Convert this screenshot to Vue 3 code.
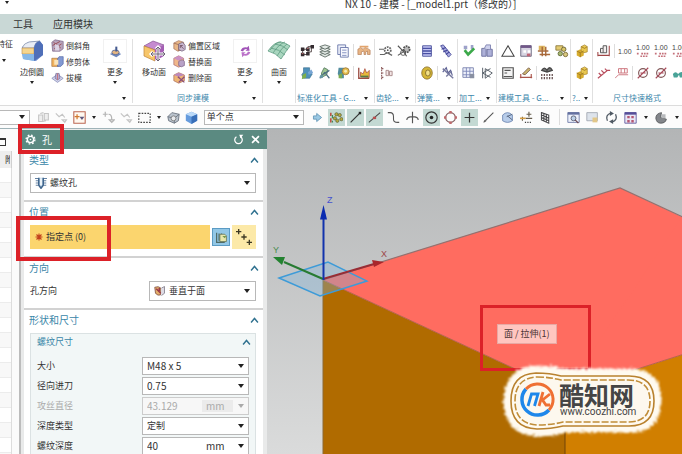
<script setup>
import { ref } from 'vue'

const art = {
  edgeBlend: '<path d="M2 8 8 3 19 2 23 6v10l-7 6-13-2z" fill="#6f8fd0"/><path d="M2 9q2-5 7-6l11-1q-5 1-6 7z" fill="#e9edf5" stroke="#7f8ca8" stroke-width=".7"/><path d="M2 9h12v6H2z" fill="#f6d68e" stroke="#b98b4c" stroke-width=".6"/><path d="M2 15h12v7L3 20z" fill="#86b8e8"/><path d="M14 9q1-6 6-7l3 4v10l-9 6z" fill="#4f6fb8"/>',
  moveFace: '<path d="M2 7 11 2l11 4-9 5z" fill="#c58bd0" stroke="#865295" stroke-width=".7"/><path d="M2 7l11 4v11L2 17z" fill="#f7c66a" stroke="#bd8238" stroke-width=".7"/><path d="M13 11l9-5v11l-9 5z" fill="#a45eb4"/><path d="M16 8v14M9 15h14M14 10l2-2 2 2M14 20l2 2 2-2M11 13l-2 2 2 2M21 13l2 2-2 2" fill="none" stroke="#fff" stroke-width="3"/><path d="M16 8v14M9 15h14M14 10l2-2 2 2M14 20l2 2 2-2M11 13l-2 2 2 2M21 13l2 2-2 2" fill="none" stroke="#6b6274" stroke-width="1"/>',
  surface: '<path d="M1 12Q7 3 14 3q5 1 9 4-4 5-9 13Q9 14 1 12z" fill="#a9d6bf" stroke="#5f9c81" stroke-width=".8"/><path d="M4 9q8 1 14 7M8 5q8 1 13 6M6 14q6-9 12-11M10 17q5-9 10-12M3 11q7-9 11-8" fill="none" stroke="#5f9c81" stroke-width=".8"/>',
  moreFeature: '<path d="M1 11l7-3 7 3-6 4z" fill="#6d87bd"/><ellipse cx="8" cy="9" rx="4.500" ry="2.800" fill="#e6b680" stroke="#52679a"/><path d="M9 2v6" stroke="#44598f" stroke-width="2.500"/>',
  moreSync: '<path d="M2 7q2-5 8-4l2-2 1 6H8l2-2Q6 4 5 8z" fill="#a154b8"/><path d="M14 9q-2 5-8 4l-2 2-1-6h5l-2 2q4 1 5-3z" fill="#bb72c9"/>',
  chamfer: '<path d="M1 4 5 1l10 2v9l-4 3H2z" fill="#b7a3bb" stroke="#715a80" stroke-width=".8"/><path d="M2 8l9-5M4 12l9-6M3 4l9 7" stroke="#9a4d56" stroke-width="1.2"/><path d="M5 6l5 2v6H5z" fill="#dcd3e4"/>',
  trimBody: '<path d="M1 4h8v10H1z" fill="#f1b35f" stroke="#a56c35" stroke-width=".8"/><path d="M8 5l2-3h5v9l-3 3H8z" fill="#8299d3" stroke="#4d63a5" stroke-width=".8"/><path d="M4 6h5v6H4z" fill="#f9e3b9"/>',
  draft: '<path d="M1 9l7-5 7 5-7 5z" fill="#d2d3ea" stroke="#777eae" stroke-width=".8"/><path d="M5 9l1-6h4l1 6-3 2z" fill="#b8acd1" stroke="#716896" stroke-width=".8"/><path d="M8 3v8" stroke="#c46d6d"/>',
  offsetRegion: '<path d="M1 5l6-3 6 2v8l-7 3-5-3z" fill="#e9b787" stroke="#9d6b59" stroke-width=".8"/><path d="M1 5l6 2v8" fill="none" stroke="#9d6b59"/><path d="M7 6l5-2 3 4v5l-4 2-4-2z" fill="#c6b5cd" stroke="#665570" stroke-width=".8"/><path d="M9 8l4 4M9 11V8h3" stroke="#6c4a5d" fill="none"/>',
  replaceFace: '<path d="M1 4l6-3 6 3v8l-6 3-6-3z" fill="#f0b78a" stroke="#a4646d" stroke-width=".8"/><path d="M1 4l6 3 6-3-6-3z" fill="#cb91c5"/><path d="M7 8q5-4 7 0v5q-4 3-7 0z" fill="#b8a2c7" stroke="#755b83" stroke-width=".8"/>',
  deleteFace: '<path d="M1 5l6-3 7 3v7l-7 3-6-3z" fill="#efb575" stroke="#a56352" stroke-width=".8"/><path d="M1 5l6 2 7-2-7-3z" fill="#bc88bd"/><path d="M6 7l8 7M14 7l-7 7" stroke="#884d79" stroke-width="1.600"/>',
  net: '<path d="M3 12V6h6V3h5M9 6v6H3M9 9h4V3" fill="none" stroke="#493d3d"/><g fill="#332b2f"><path d="M1 4h4v4H1zM7 4h4v4H7zM1 10h4v4H1zM7 9h4v4H7zM12 1h4v4h-4z"/></g><path d="M2 11h2M8 5h2" stroke="#cf7777"/>',
  stack: '<g fill="#e4eae6" stroke="#5b6962" stroke-width="1"><path d="M2 12l6-2 6 2-6 3z"/><path d="M2 9l6-2 6 2-6 3z"/><path d="M2 6l6-2 6 2-6 3z"/><path d="M2 3l6-2 6 2-6 3z"/></g>',
  sheets: '<path d="M2 1h9v11H2z" fill="#eef1fa" stroke="#6775a8"/><path d="M5 4h9v11H5z" fill="#f8f9fe" stroke="#6775a8"/><path d="M7 7h5M7 10h5M7 13h5" stroke="#7887ba"/>',
  hand: '<path d="M1 12V6l3-2 3 2 2-2 3 1 3 2v5h-3V8l-2 1v3H8V8L5 9v3z" fill="#e8b585" stroke="#af744d" stroke-width=".7"/><path d="M3 3h10" stroke="#e2a46c" stroke-width="2"/>',
  partBlue: '<path d="M4 2h7v5l3 2-3 5H4l-2-4 2-3z" fill="#4f91ba" stroke="#376b8a" stroke-width=".7"/><path d="M3 10l4-2v5l-5 2z" fill="#7eae4a"/><path d="M9 7l4-3 2 4-5 2z" fill="#78a5d4"/>',
  partPen: '<path d="M4 13V8l3-6 4 2-1 6z" fill="#9dc590" stroke="#4e735a" stroke-width=".9"/><path d="M7 9l6-4M2 14l6-7M9 9l4 5" stroke="#4c6e80" stroke-width="1.4"/><circle cx="4" cy="12" r="2" fill="#6597a3"/>',
  partGear: '<path d="M3 2h6v12H5l-3-5z" fill="#528c9e"/><circle cx="11" cy="6" r="4" fill="#e5bc4c" stroke="#9e793c"/><circle cx="11" cy="6" r="1.6" fill="#f5ebb5"/><path d="M3 10l4-2v6H3z" fill="#7cab50"/>',
  chartSpark: '<path d="M2 2v12h12" fill="none" stroke="#9a4c42" stroke-width="1.5"/><path d="M4 12V7l3 2 2-6 2 5 3-3v8z" fill="#e7b83b" stroke="#a6443e" stroke-width=".8"/><path d="M4 12h9" stroke="#567b43" stroke-width="2"/>',
  gearA: '<circle cx="10" cy="7" r="3.500" fill="none" stroke="#696969" stroke-width="2" stroke-dasharray="2 1"/><circle cx="10" cy="7" r="1" fill="#555"/><path d="M0 6h6M1 12h5l3-2 6 3" fill="none" stroke="#666" stroke-width="1.4"/>',
  gearB: '<circle cx="11" cy="6" r="3.5" fill="#bbb" stroke="#555" stroke-width="2" stroke-dasharray="2 1"/><circle cx="7" cy="10" r="3" fill="none" stroke="#555"/><path d="M1 2l6 6 4 6M1 13l6-4" stroke="#555" stroke-width="1.3" fill="none"/>',
  tree: '<path d="M3 1v14M3 3h3M3 8h3M3 13h3" stroke="#8e5e5e" stroke-width="1.3" stroke-dasharray="2 1" fill="none"/><path d="M8 5h3v6H8zM12 6h3v5h-3z" fill="#f3e6e6" stroke="#a58585"/>',
  spring: '<path d="M3 2h10v12H3z" fill="#c3c5f2" stroke="#484f99"/><path d="M3 5h10M3 8h10M3 11h10" stroke="#4950a3" stroke-width="1.6"/>',
  springTilt: '<path d="M3 2l3-1 9 11-3 3z" fill="#a9abe0" stroke="#474a99"/><path d="M4 6l5-2M6 9l5-2M9 12l4-3" stroke="#44479a" stroke-width="1.3"/>',
  disc: '<ellipse cx="8" cy="8" rx="6" ry="7" fill="#d6b736" stroke="#8f7428"/><ellipse cx="9" cy="8" rx="2.7" ry="3.5" fill="#f3e187" stroke="#826c2c"/>',
  springPen: '<path d="M2 7l4-5 2 6 3-3 2 6" fill="none" stroke="#5d6294" stroke-width="1.3"/><path d="M2 3l12 11M6 12l6-6" stroke="#777aa0" stroke-width="1.600"/>',
  machineCheck: '<path d="M2 2h4v4H2zM10 1h3v5h-3z" fill="#9da1c9"/><path d="M3 7l4 5 7-7" fill="none" stroke="#3ca94a" stroke-width="3"/>',
  blocks: '<path d="M2 5h5v9H2zM8 6h6v8H8z" fill="#aeb1d8" stroke="#686d9b"/><path d="M5 5l2-4h5v5" fill="#cdd0ec" stroke="#7b7faf"/>',
  gridPage: '<path d="M1 2h12v11H1z" fill="#edf0fa" stroke="#7881ad"/><path d="M1 6h12M5 2v11M9 2v11M1 10h12" stroke="#7c86b8"/><path d="M9 9h5v5H9z" fill="#8990a2"/>',
  mirror: '<path d="M3 2v12M3 8l9-5M3 8l9 5M6 3l8 5-8 6M6 3v11" fill="none" stroke="#58616a" stroke-width="1.100"/>',
  triangle: '<path d="M8 2l7 12H1z" fill="none" stroke="#444" stroke-width="1.2"/>',
  tableTool: '<path d="M2 2h12v12H2z" fill="#d8d5e2" stroke="#65617a"/><path d="M2 3h12" stroke="#715788" stroke-width="3"/><path d="M5 7h3v3H5zM10 7h3v3h-3z" fill="#fff"/><path d="M9 11h4v3H9z" fill="#c06474"/>',
  hashTool: '<path d="M2 2h7v5H2z" fill="#ddb55f"/><path d="M1 8h12M6 3v11M10 3v11M3 12h12" stroke="#a8693a" stroke-width="1.6"/>',
  leafTool: '<path d="M1 2h8v5H1z" fill="#e4cb71" stroke="#8c793d"/><circle cx="10" cy="6" r="2.500" fill="#dac666" stroke="#665f38"/><circle cx="6" cy="11" r="2.500" fill="#a7b76f" stroke="#5f6937"/><circle cx="12" cy="12" r="2.500" fill="#d9c87e" stroke="#776835"/>',
  frame: '<path d="M2 2h12v12H2z" fill="#f4f4f4" stroke="#505050" stroke-width="1.3"/><path d="M4 5h7M4 8h3M3 12h10" stroke="#555" stroke-width="1.4"/>',
  plane: '<path d="M1 13h14M2 9v5M14 9v5" stroke="#aa544a" stroke-width="1.3"/><path d="M4 9l7-7 2 2-6 6z" fill="#cbb56d" stroke="#785c4b"/>',
  barcode: '<path d="M2 5q3-5 6 0 3-6 6 0l-6 2z" fill="#777" stroke="#444" stroke-width="1.5"/><path d="M2 9v6M5 9v6M8 9v6M11 9v6M14 9v6" stroke="#6a5555" stroke-width="1.500" stroke-dasharray="2.500 1"/>',
  gold: '<path d="M2 8l4-2 4 2v5l-4 2-4-2z" fill="#d8ad2e"/><path d="M7 3l4-2 3 2v6l-4 1-3-2z" fill="#e9c850" stroke="#a58128" stroke-width=".8"/><path d="M2 8l4 2 4-2M6 10v5M7 3l4 2 3-2" fill="none" stroke="#9d7824"/>',
  dimBox: '<path d="M1 13h13M1 9v5M14 2v12" stroke="#9f4545" stroke-width="1.2" fill="none"/><path d="M4 10V5h3V2h4v8z" fill="#f3eeee" stroke="#555" stroke-width="1.100"/><path d="M7 5v5" stroke="#555"/>',
  d100: '<text x="0" y="11" font-size="8" font-family="Liberation Sans" fill="#444">1.00</text>',
  dtol: '<text x="0" y="7" font-size="8" font-family="Liberation Sans" fill="#444">1.00</text><path d="M1 11h3M6 11h8M5 14h9" stroke="#c4707a" stroke-width="1.8" stroke-dasharray="2 1"/>',
  leader: '<path d="M1 14 12 5h3M2 8l3 3M5 5l3 3M9 3l2 2" fill="none" stroke="#b84d5d" stroke-width="1.4"/>',
  leaderBox: '<path d="M0 14 4 10h11M4 3h10v5H4zM7 3v5M11 3v5" fill="none" stroke="#ce7880" stroke-width="1.1"/>',
  diameter: '<circle cx="8" cy="8" r="5" fill="none" stroke="#805657" stroke-width="1.3"/><path d="M2 14 14 2M5 8h6" stroke="#a74958" stroke-width="1.3"/>',
  glasses: '<path d="M1 9q3-4 6 0 3-4 8-1v5H9L8 10l-2 3H2z" fill="#49a398"/>',
  ghostA: '<path d="M2 5h5v8H2zM9 3h5v8H9zM4 3l4-1M7 13l4-1" fill="#eee" stroke="#c5c5c5" stroke-width="1.3"/>',
  ghostB: '<path d="M1 3l4 4 4-3 3 4M9 11h5l-2 3z" fill="none" stroke="#c5c5c5" stroke-width="1.5"/>',
  snap: '<path d="M1 1h14v14H1z" fill="#fff8f0" stroke="#bc6752" stroke-width="1.3"/><path d="M5 4v6M2 7h6" stroke="#d2772d" stroke-width="1.5"/><path d="M8 7h6l-3 4z" fill="#5e567c"/>',
  ghostC: '<path d="M4 1v6M1 4h6M8 4q4 0 4 6M9 11h6l-3 3z" fill="none" stroke="#b4b4b4" stroke-width="1.5"/>',
  marquee: '<path d="M1 3h14v11H1z" fill="none" stroke="#454545" stroke-width="1.4" stroke-dasharray="2 1.5"/>',
  cubeGray: '<path d="M1 7l5-5 9 2-1 8-5 3-7-3z" fill="#bac3cd" stroke="#626b77"/><path d="M1 7l8 2 6-5M9 9v6" fill="none" stroke="#626b77"/><circle cx="8" cy="9" r="3" fill="#e8eaed" stroke="#777"/>',
  cubeBlue: '<path d="M1 4l7-3 7 3v8l-7 4-7-4z" fill="#659bdd"/><path d="M1 4l7 3 7-3-7-3z" fill="#bcdaf8"/><path d="M8 7l7-3v8l-7 4z" fill="#396fb8"/>',
  next: '<path d="M3 6h4V3l6 5-6 5v-3H3z" fill="#9ac8e3" stroke="#5c91b4"/>',
  points: '<g fill="#b6a93c" stroke="#575b36" stroke-width=".8"><circle cx="8" cy="4" r="2"/><circle cx="12" cy="5" r="2"/><circle cx="6" cy="9" r="2"/><circle cx="9" cy="12" r="2"/><circle cx="14" cy="10" r="2"/></g><path d="M1 2v4M1 9v5" stroke="#bd5446" stroke-width="2"/><path d="M3 5v4M3 12v2" stroke="#3f8a58" stroke-width="1.500"/>',
  lineEnd: '<path d="M2 14 13 3" stroke="#333" stroke-width="1.4"/><path d="M12 1h3v3h-3z" fill="#222"/>',
  lineMid: '<path d="M1 14 15 2" stroke="#444" stroke-width="1.3"/><path d="M6 7h4v3H6z" fill="#b85050"/>',
  hook: '<path d="M1 2h3q4 0 4 5v3q0 4 5 4h2" fill="none" stroke="#555" stroke-width="1.3"/>',
  cross: '<path d="M8 1v14M1 11q0-4 7-4t7 4" fill="none" stroke="#555" stroke-width="1.4"/>',
  target: '<circle cx="8" cy="8" r="7" fill="none" stroke="#333" stroke-width="1.4"/><circle cx="8" cy="8" r="2.2" fill="#222"/>',
  quad: '<circle cx="8" cy="8" r="6" fill="none" stroke="#80595b" stroke-width="1.3"/><path d="M6.500 0h3v3h-3zM6.500 13h3v3h-3zM0 6.500h3v3H0zM13 6.500h3v3h-3z" fill="#c0696c"/>',
  plus: '<path d="M8 2v12M2 8h12" stroke="#333" stroke-width="1.5"/>',
  slash: '<path d="M2 14 14 2" stroke="#555" stroke-width="1.3"/><circle cx="4" cy="12" r="1.3" fill="#666"/>',
  facePoint: '<path d="M2 5q6-6 12 0v7q-6 4-12 0z" fill="#b8cdea" stroke="#6680ae"/><path d="M7 7l7-3M8 6l6 5" stroke="#596883" stroke-width="1.2"/>',
  pointList: '<path d="M11 1v6M8 4h6M3 7v5M7 9h8" stroke="#665d4c" stroke-width="1.4"/><path d="M0 9h7" stroke="#d59f45" stroke-width="2"/><path d="M6 14h1.500M9 14h1.500M12 14h1.500" stroke="#444" stroke-width="1.5"/>',
  gridWall: '<path d="M3 2l9 3v10l-9-4zM6 3v9M9 4v10M3 5l9 4M3 8l9 4" fill="none" stroke="#48484b" stroke-width="1.3"/>',
  winZoom: '<path d="M1 2h14v12H1z" fill="#edf1fb" stroke="#6471a0"/><path d="M1 3h14" stroke="#6471a0" stroke-width="3"/><circle cx="8" cy="9" r="3" fill="#bdd2e9" stroke="#4d5268"/><path d="M10 11l4 4" stroke="#6b4852" stroke-width="1.5"/>',
  winHand: '<path d="M1 2h13v10H1z" fill="#dde3eb" stroke="#9da3ad"/><path d="M8 8h6v6H8z" fill="#e2c788"/>',
  rotate: '<path d="M3 12Q0 5 7 2.500M13 4q3 7-4 9.500" fill="none" stroke="#4f5963" stroke-width="1.6"/><path d="M6 0l5 3-5 3zM10 16l-5-3 5-3z" fill="#4f5963"/>',
  viewGrid: '<path d="M1 2h14v13H1z" fill="#e9e7f6" stroke="#564f99"/><path d="M1 3h14" stroke="#564f99" stroke-width="3"/><path d="M4 6h3v3H4zM9 6h3v3H9zM4 11h3v3H4zM9 11h3v3H9z" fill="#b55773"/>',
  shade: '<path d="M1 9q0-6 7-7l-1 6 7 2q-1 5-7 5-5 0-6-6z" fill="#83868b" stroke="#4f5154"/><path d="M8 4h5v5H8z" fill="#b7b9bc"/>',
  gear: '<circle cx="8" cy="8" r="4.6" fill="none" stroke="#fff" stroke-width="2"/><circle cx="8" cy="8" r="6.4" fill="none" stroke="#fff" stroke-width="2" stroke-dasharray="2.5 2.53"/><circle cx="8" cy="8" r="1.2" fill="#fff"/>',
  reset: '<path d="M5 4a5.5 5.5 0 1 0 6 0" fill="none" stroke="#fff" stroke-width="1.8"/><path d="M9 1h6l-4 5z" fill="#fff"/>',
  close: '<path d="M3 3l10 10M13 3 3 13" stroke="#fff" stroke-width="2.400"/>',
  chevron: '<path d="M3 11l5-6 5 6" fill="none" stroke="#2f718f" stroke-width="2"/>',
  thread: '<path d="M0 2h4M1 5h3M1 8h3M1 11h3M12 2h4M12 5h3M12 8h3M12 11h3" stroke="#6482a3" stroke-width="1.6"/><path d="M5 1v10l3 4 3-4V1" fill="#b9d2e6" stroke="#40658c" stroke-width="2"/><path d="M8 2v9" stroke="#fff" stroke-width="2"/>',
  normal: '<path d="M1 3q5-2 8 1v9q-4 2-7-2z" fill="#e5b06b" stroke="#75463f"/><path d="M3 5l6 6M7 4v4" stroke="#993847" stroke-width="2"/><path d="M10 4l4-2v9l-4 3" fill="#dddbe6" stroke="#77727f"/>',
  star: '<path d="M8 1v14M1 8h14M3 3l10 10M13 3 3 13" stroke="#c2411c" stroke-width="2.200"/>',
  sketch: '<path d="M2 2v12h10M5 3v9M8 3v9" fill="none" stroke="#4f6a68" stroke-width="1.5"/><path d="M6 4h6l2 2v7H6z" fill="#e8e7ac" stroke="#657453"/><path d="M9 6h5l-2 3z" fill="#71964d"/>',
  pointer3: '<path d="M3 0v6M0 3h6M9 6v6M6 9h6M15 12v6M12 15h6" stroke="#3c3824" stroke-width="1.500"/>'
}

const ribbon = [
  { w: 'w133', cut: '特征', big: ['边倒圆', 'edgeBlend'], list: [['倒斜角', 'chamfer'], ['修剪体', 'trimBody'], ['拔模', 'draft']], bigArrow: true, more: 'moreFeature', label: '', arrow: true },
  { w: 'w130', big: ['移动面', 'moveFace'], list: [['偏置区域', 'offsetRegion'], ['替换面', 'replaceFace'], ['删除面', 'deleteFace']], more: 'moreSync', label: '同步建模', center: true, arrow: true },
  { w: 'w33', big: ['曲面', 'surface'], bigArrow: true, label: '' },
  { w: 'w79', rows: [['net', 'stack', 'sheets', '|', 'hand'], ['partBlue', 'partPen', 'partGear', '|', 'chartSpark']], label: '标准化工具 - G...', arrow: true },
  { w: 'w41', rows: [['gearA', 'gearB'], ['tree']], label: '齿轮...', arrow: true },
  { w: 'w42', rows: [['spring', 'springTilt'], ['disc', '|', 'springPen']], label: '弹簧...', arrow: true },
  { w: 'w39', rows: [['machineCheck', 'blocks'], ['gridPage', 'mirror']], label: '加工...', arrow: true },
  { w: 'w74', rows: [['triangle', 'tableTool', 'hashTool', 'leafTool'], ['frame', 'plane', '|', 'barcode']], label: '建模工具 - G...', arrow: true },
  { w: 'w22', rows: [['gold'], ['gold']], label: '?..', arrow: true },
  { w: 'rest', rows: [['dimBox', '|', 'd100', 'dtol', 'dtol', 'dtol'], ['leader', 'leaderBox', '|', 'diameter', 'diameter', 'glasses']], label: '尺寸快速格式', center: true }
]

const leftTools = ['ghostA', 'ghostB', 'snap', 'v', 'ghostC', 'ghostB', 'marquee', 'v', 'cubeGray', 'cubeBlue']
const snapTools = [
  ['points', true], ['lineEnd', true], ['lineMid', true], ['hook', false], ['cross', false], ['target', true],
  ['quad', false], ['plus', true], ['slash', false], ['facePoint', false], ['pointList', false], ['gridWall', false]
]
const viewTools = ['winZoom', 'winHand', 'rotate', 'viewGrid', 'v', 'shade', 'v']

const scope = ref('单个点')
const holeType = ref('螺纹孔')
const direction = ref('垂直于面')
const size = ref('M48 x 5')
const radial = ref('0.75')
const tap = ref('43.129')
const depthType = ref('定制')
const depth = ref('40')
</script>

<template>
  <div class="app">
    <header class="titlebar">
      <i class="tri"></i>
      <span class="title">NX 10 - 建模 - [_model1.prt（修改的）]</span>
    </header>

    <nav class="tabs">
      <button>工具</button>
      <button>应用模块</button>
    </nav>

    <section class="ribbon">
      <div v-for="(g, gi) in ribbon" :key="gi" class="group" :class="g.w">
        <div v-if="g.big" class="group-body">
          <button v-if="g.cut" class="cut"><span>{{ g.cut }}</span><i class="tri"></i></button>
          <button class="big">
            <svg viewBox="0 0 24 24" v-html="art[g.big[1]]"></svg>
            <span>{{ g.big[0] }}</span>
            <i v-if="g.bigArrow" class="tri"></i>
          </button>
          <div v-if="g.list" class="list">
            <button v-for="it in g.list" :key="it[0]">
              <svg viewBox="0 0 16 16" v-html="art[it[1]]"></svg><span>{{ it[0] }}</span>
            </button>
          </div>
          <button v-if="g.more" class="big more">
            <b><svg viewBox="0 0 16 16" v-html="art[g.more]"></svg></b>
            <span>更多</span>
            <i class="tri"></i>
          </button>
        </div>
        <div v-else class="rows">
          <div v-for="(r, ri) in g.rows" :key="ri" class="row">
            <template v-for="(n, ni) in r" :key="ni">
              <i v-if="n === '|'" class="bar"></i>
              <button v-else :aria-label="n"><svg viewBox="0 0 16 16" v-html="art[n]"></svg></button>
            </template>
          </div>
        </div>
        <div class="group-foot">
          <span :class="{ center: g.center }">{{ g.label }}</span>
          <i v-if="g.arrow" class="tri"></i>
        </div>
      </div>
    </section>

    <section class="selbar">
      <div class="pick filter"><select aria-label="过滤器"><option></option></select></div>
      <div class="tools left">
        <template v-for="(n, i) in leftTools" :key="i">
          <span v-if="n === 'v'" class="drop"><i class="tri"></i></span>
          <button v-else :aria-label="n"><svg viewBox="0 0 16 16" v-html="art[n]"></svg></button>
        </template>
      </div>
      <div class="pick scope"><select v-model="scope" aria-label="选择范围"><option>单个点</option></select></div>
      <div class="tools snap">
        <button aria-label="next"><svg viewBox="0 0 16 16" v-html="art.next"></svg></button>
        <button v-for="t in snapTools" :key="t[0]" :class="{ on: t[1] }" :aria-label="t[0]" :aria-pressed="t[1]">
          <svg viewBox="0 0 16 16" v-html="art[t[0]]"></svg>
        </button>
      </div>
      <i class="bar"></i>
      <div class="tools view">
        <template v-for="(n, i) in viewTools" :key="i">
          <span v-if="n === 'v'" class="drop"><i class="tri"></i></span>
          <button v-else :aria-label="n"><svg viewBox="0 0 16 16" v-html="art[n]"></svg></button>
        </template>
      </div>
    </section>

    <main class="work">
      <aside class="navigator">
        <div class="nav-top"><i></i></div>
        <div class="nav-head"><span>附</span></div>
        <div class="nav-rows"></div>
      </aside>

      <form class="dialog" @submit.prevent>
        <div class="dialog-head">
          <svg viewBox="0 0 16 16" v-html="art.gear"></svg>
          <h1>孔</h1>
          <button type="button" aria-label="重置"><svg viewBox="0 0 16 16" v-html="art.reset"></svg></button>
          <button type="button" aria-label="关闭"><svg viewBox="0 0 16 16" v-html="art.close"></svg></button>
        </div>

        <section>
          <h2>类型<svg viewBox="0 0 16 16" v-html="art.chevron"></svg></h2>
          <div class="pick tall">
            <svg viewBox="0 0 16 16" v-html="art.thread"></svg>
            <select v-model="holeType" aria-label="类型"><option>螺纹孔</option></select>
          </div>
        </section>

        <section>
          <h2>位置<svg viewBox="0 0 16 16" v-html="art.chevron"></svg></h2>
          <div class="specify">
            <div class="prompt"><svg viewBox="0 0 16 16" v-html="art.star"></svg>指定点 (0)</div>
            <button type="button" class="sketch" aria-label="绘制截面"><svg viewBox="0 0 16 16" v-html="art.sketch"></svg></button>
            <button type="button" class="pts" aria-label="点"><svg viewBox="0 0 18 18" v-html="art.pointer3"></svg></button>
          </div>
        </section>

        <section>
          <h2>方向<svg viewBox="0 0 16 16" v-html="art.chevron"></svg></h2>
          <div class="field">
            <label for="dir">孔方向</label>
            <div class="pick tall">
              <svg viewBox="0 0 16 16" v-html="art.normal"></svg>
              <select id="dir" v-model="direction"><option>垂直于面</option></select>
            </div>
          </div>
        </section>

        <section>
          <h2>形状和尺寸<svg viewBox="0 0 16 16" v-html="art.chevron"></svg></h2>
          <div class="sub">
            <h3>螺纹尺寸<svg viewBox="0 0 16 16" v-html="art.chevron"></svg></h3>
            <div class="field">
              <label for="size">大小</label>
              <div class="pick"><select id="size" v-model="size"><option>M48 x 5</option></select></div>
            </div>
            <div class="field">
              <label for="radial">径向进刀</label>
              <div class="pick"><select id="radial" v-model="radial"><option>0.75</option></select></div>
            </div>
            <div class="field off">
              <label for="tap">攻丝直径</label>
              <div class="pick"><input id="tap" v-model="tap" disabled><span class="unit">mm</span></div>
            </div>
            <div class="field">
              <label for="dtype">深度类型</label>
              <div class="pick"><select id="dtype" v-model="depthType" class="cjk"><option>定制</option></select></div>
            </div>
            <div class="field">
              <label for="depth">螺纹深度</label>
              <div class="pick"><input id="depth" v-model="depth"><span class="unit">mm</span></div>
            </div>
          </div>
        </section>

        <i class="mark mark-head"></i>
        <i class="mark mark-point"></i>
      </form>

      <div class="viewport">
        <svg class="scene" viewBox="267 129 415 325" preserveAspectRatio="xMinYMin slice">
          <path d="M323 280 565 392V460H323z" fill="#b06b00" />
          <path d="M565 392 700 349V460H565z" fill="#d17f00" />
          <path d="M323 280 620 188 800 272 565 392z" fill="#ff6c60" />
          <path d="M565 392 700 349V225L682 217z" fill="#ff6c60" />
          <path d="M323 280 620 188 700 225" fill="none" stroke="#94716f" stroke-width="1.2" />
          <path d="M323 280 565 392 700 349" fill="none" stroke="#b5634c" stroke-width="1" />
          <path d="M565 392V460" stroke="#704509" stroke-width="1" />
          <path d="M323 280V460" stroke="#8d6a34" stroke-width="1" />
          <path d="M279 278 328 262 367 281 320 296z" fill="#7fb5dc" fill-opacity=".35" stroke="#3d9bd8" stroke-width="1.4" />
          <path d="M323 279 374 264" stroke="#982d35" stroke-width="2" />
          <path d="M384 262 372 260 374 267z" fill="#a9262b" />
          <path d="M323 279 284 262" stroke="#277b32" stroke-width="2" />
          <path d="M273 257 285 257 282 265z" fill="#238230" />
          <path d="M323.500 280V216" stroke="#1233ac" stroke-width="2" />
          <path d="M323.500 205 327 219.500 320 219.500z" fill="#0a2bb0" />
          <g font-family="Liberation Sans" font-size="9">
            <text x="327" y="203" fill="#4450d0">Z</text>
            <text x="273" y="253" fill="#4a8c4e">Y</text>
            <text x="381" y="257" fill="#9c4548">X</text>
          </g>
        </svg>

        <div class="tooltip">面 / 拉伸(1)</div>
        <i class="mark mark-face"></i>

        <svg class="brand" viewBox="496 358 174 84">
          <defs>
            <filter id="rough" x="-10%" y="-20%" width="120%" height="140%">
              <feTurbulence type="fractalNoise" baseFrequency=".5" numOctaves="2" seed="4" />
              <feDisplacementMap in="SourceGraphic" scale="7" xChannelSelector="R" yChannelSelector="G" />
              <feGaussianBlur stdDeviation="1" />
            </filter>
          </defs>
          <path d="M538 371Q551 371 562 374H630Q656 374 656 401T630 427H564Q553 431 538 431 509 430 509 401 509 371 538 371z" fill="#fffaf0" stroke="#fffaf0" stroke-width="11" filter="url(#rough)" />
          <path d="M536 373Q550 373 561 376H629Q654 376 654 401T629 426H563Q551 429 537 429 511 428 511 401 511 374 536 373z" fill="none" stroke="#b9822f" stroke-width="1.6" />
          <path d="M537 377Q549 377 561 380H628Q650 380 650 401T628 422H563Q551 425 538 425 515 424 515 401 515 378 537 377z" fill="#fdf8ee" stroke="#c08d38" stroke-width="1.6" stroke-dasharray="7 2" />
          <path d="M526 389A15.500 15.500 0 0 0 549 410" fill="none" stroke="#1e87ea" stroke-width="3.500" />
          <path d="M526 389A15.500 15.500 0 0 1 549 410" fill="none" stroke="#ef7033" stroke-width="3" />
          <path d="M528 406 531.500 394H538L534.500 406" fill="none" stroke="#1e87ea" stroke-width="2.800" />
          <path d="M543 392 539 406M550 394 542.500 400 546 405H550" fill="none" stroke="#ef7033" stroke-width="2.800" />
          <text x="559" y="405" font-family="Noto Sans CJK SC, sans-serif" font-weight="700" font-size="25" fill="#454545">酷知网</text>
          <text x="560" y="415" font-family="Roboto, sans-serif" font-size="10" fill="#444">www.coozhi.com</text>
        </svg>
      </div>
    </main>
  </div>
</template>

<style>
body {
  margin: 0;
  overflow: hidden;
}
</style>

<style scoped>
* {
  box-sizing: border-box;
}
.app {
  display: flex;
  flex-direction: column;
  height: 100vh;
  overflow: hidden;
  background: #fff;
  color: #333;
  font: 9px/12px "Noto Sans CJK SC", sans-serif;
}
button,
select,
input {
  margin: 0;
  padding: 0;
  border: 0;
  background: none;
  color: inherit;
  font: inherit;
}
svg {
  display: block;
  flex: none;
}
h1,
h2,
h3 {
  margin: 0;
  font-weight: 400;
}
.tri {
  flex: none;
  width: 0;
  height: 0;
  border: 2px solid transparent;
  border-top: 3px solid #222;
  border-bottom: 0;
}
.titlebar {
  display: flex;
  flex: none;
  height: 14px;
  padding-left: 5px;
  font-size: 10px;
  line-height: 7px;
}
.titlebar .tri {
  margin-top: 1px;
}
.title {
  flex: 1;
  padding-left: 170px;
  text-align: center;
}
.tabs {
  display: flex;
  flex: none;
  gap: 20px;
  height: 20px;
  padding-left: 13px;
  background: #c9d8d6;
  font-size: 10px;
}
.ribbon {
  display: flex;
  flex: none;
  height: 72px;
  padding: 5px 0 2px;
  border-bottom: 1px solid #dcdcdc;
  font-size: 8px;
  line-height: 10px;
}
.group {
  display: flex;
  flex: none;
  flex-direction: column;
  justify-content: space-between;
  border-right: 1px solid #e0e0e0;
}
.w133 { width: 133px; }
.w130 { width: 130px; }
.w33 { width: 33px; }
.w79 { width: 79px; }
.w41 { width: 41px; }
.w42 { width: 42px; }
.w39 { width: 39px; }
.w74 { width: 74px; }
.w22 { width: 22px; }
.rest {
  flex: 1 0 89px;
  border: 0;
}
.group-body {
  display: flex;
}
.w133 .group-body {
  gap: 3px;
}
.w130 .group-body {
  padding-left: 5px;
  gap: 3px;
}
.cut {
  display: flex;
  flex-direction: column;
  align-items: flex-end;
  gap: 10px;
  width: 13px;
  overflow: hidden;
  white-space: nowrap;
}
.cut .tri {
  margin-right: 7px;
}
.big {
  display: flex;
  flex: none;
  flex-direction: column;
  align-items: center;
  gap: 4px;
  width: 32px;
}
.big > svg,
.big b {
  width: 24px;
  height: 24px;
}
.big b {
  display: grid;
  place-items: center;
  border: 1px solid #f1f1f1;
}
.big b svg {
  width: 13px;
  height: 13px;
}
.more {
  width: 26px;
  margin-left: auto;
  margin-right: 4px;
}
.list {
  display: flex;
  flex-direction: column;
  gap: 3px;
}
.list button {
  display: flex;
  align-items: center;
  gap: 2px;
  height: 13px;
  white-space: nowrap;
}
.list svg {
  width: 13px;
  height: 13px;
}
.rows {
  display: flex;
  flex-direction: column;
  gap: 8px;
  padding: 5px 0 0 4px;
}
.row {
  display: flex;
  gap: 4px;
  height: 14px;
}
.row button,
.row svg {
  width: 14px;
  height: 14px;
}
.bar {
  flex: none;
  width: 1px;
  margin: 0 -1px;
  background: #ddd;
}
.group-foot {
  display: flex;
  align-items: center;
  height: 10px;
  padding: 0 6px 0 1px;
  color: #3c86ab;
  white-space: nowrap;
}
.group-foot span {
  flex: 1;
}
.group-foot .center {
  text-align: center;
}
.w22 .group-foot {
  padding-right: 4px;
}
.selbar {
  display: flex;
  flex: none;
  align-items: center;
  height: 23px;
  border-bottom: 1px solid #9fb3b8;
  background: #fcfcfc;
}
.pick {
  display: flex;
  align-items: center;
  height: 18px;
  padding-right: 5px;
  border: 1px solid #b8b8b8;
  background: #fff;
}
.pick::after {
  content: "";
  flex: none;
  border: 3px solid transparent;
  border-top: 4px solid #222;
  border-bottom: 0;
  pointer-events: none;
}
.pick select {
  flex: 1;
  min-width: 0;
  appearance: none;
  outline: 0;
}
.selbar .pick {
  height: 15px;
  padding-left: 2px;
  padding-right: 4px;
}
.filter {
  width: 31px;
  border-left: 0;
}
.scope {
  width: 106px;
}
.tools {
  display: flex;
  align-items: center;
}
.tools button {
  display: grid;
  place-items: center;
  width: 17px;
  height: 17px;
}
.tools svg {
  width: 13px;
  height: 13px;
}
.tools .on {
  background: #c3d9d3;
}
.left {
  gap: 1px;
  padding: 0 4px 0 5px;
}
.snap {
  gap: 2px;
  padding: 0 6px 0 5px;
}
.drop {
  display: grid;
  place-items: center;
  width: 10px;
}
.selbar > .bar {
  height: 16px;
}
.view {
  gap: 2px;
  padding-left: 6px;
}
.work {
  display: flex;
  flex: 1;
  min-height: 0;
}
.navigator {
  display: flex;
  flex: none;
  flex-direction: column;
  width: 19px;
  padding-right: 7px;
  background: #fbfbfb;
}
.nav-top {
  height: 22px;
  padding-top: 9px;
}
.nav-top i {
  display: block;
  width: 6px;
  height: 8px;
  border: 1px solid #333;
  border-top-width: 2px;
  border-left: 0;
}
.nav-head {
  height: 17px;
  padding-left: 5px;
  overflow: hidden;
  border-right: 1px solid #d0d0d0;
  background: #eee;
  line-height: 17px;
}
.nav-head span {
  display: block;
  width: 5px;
  overflow: hidden;
}
.nav-rows {
  flex: 1;
  border-right: 1px solid #ddd;
  background: repeating-linear-gradient(#fff 0 14px, #ececec 14px 15px, #f8f8f8 15px 29px, #ececec 29px 30px);
}
.dialog {
  position: relative;
  z-index: 1;
  display: flex;
  flex: none;
  flex-direction: column;
  width: 248px;
  padding: 1px 4px 0 3px;
  border-left: 2px solid #bcbcbc;
  background: #e9eaea;
}
.dialog-head {
  display: flex;
  flex: none;
  align-items: center;
  gap: 6px;
  height: 19px;
  margin: 0 -4px 0 -3px;
  padding: 0 6px 0 4px;
  background: #5b8a81;
  color: #fff;
}
.dialog-head svg {
  width: 11px;
  height: 11px;
}
.dialog-head h1 {
  flex: 1;
  font-size: 10px;
}
.dialog section {
  flex: none;
  padding: 3px 7px 7px 6px;
  border-bottom: 2px solid #d2d2d2;
  background: #fff;
}
.dialog section:first-of-type {
  padding-top: 4px;
}
.dialog section:last-of-type {
  flex: 1;
}
h2 {
  display: flex;
  align-items: center;
  justify-content: space-between;
  height: 14px;
  margin: 0 -4px 6px -1px;
  color: #3a86a8;
  font-size: 10px;
}
h2 svg,
h3 svg {
  width: 11px;
  height: 11px;
}
.tall {
  height: 20px;
  gap: 3px;
  padding-left: 4px;
}
.tall svg {
  width: 12px;
  height: 12px;
}
.specify {
  display: flex;
  gap: 2px;
  height: 24px;
}
.prompt {
  display: flex;
  flex: 1;
  align-items: center;
  gap: 3px;
  padding-left: 5px;
  background: #fbd56e;
}
.prompt svg {
  width: 8px;
  height: 8px;
}
.specify button {
  display: grid;
  place-items: center;
}
.specify .sketch {
  width: 18px;
  height: 18px;
  margin: 3px 0;
  border: 1px solid #5b9bc4;
  background: #92c7e6;
}
.sketch svg {
  width: 13px;
  height: 13px;
}
.specify .pts {
  width: 24px;
  background: #fce9a8;
}
.pts svg {
  width: 16px;
  height: 16px;
}
.field {
  display: flex;
  align-items: center;
  justify-content: space-between;
}
.field .tall {
  width: 107px;
}
.sub {
  display: flex;
  flex-direction: column;
  gap: 2px;
  padding: 0 6px;
  border: 1px solid #dbe2e3;
  border-bottom: 0;
  background: #f2f7f7;
}
h3 {
  display: flex;
  align-items: center;
  justify-content: space-between;
  height: 16px;
  margin-right: -3px;
  margin-bottom: 5px;
  color: #3a86a8;
  font-size: 9px;
}
.sub .pick {
  width: 107px;
  padding-left: 4px;
  padding-right: 4px;
  font-size: 10px;
}
.pick .cjk {
  font-size: 9px;
}
.pick input {
  flex: 1;
  min-width: 0;
  width: 40px;
  outline: 0;
}
.unit {
  width: 31px;
  margin-right: 5px;
  padding-left: 4px;
}
.off {
  color: #aaa;
}
.off .unit {
  background: #ebebeb;
}
.off .pick {
  border-color: #ccc;
  background: #f7f7f7;
}
.off .pick::after {
  border-top-color: #aaa;
}
.mark {
  position: absolute;
  border: 4px solid #dc2128;
}
.mark-head {
  top: -5px;
  left: -3px;
  width: 46px;
  height: 30px;
}
.mark-point {
  top: 87px;
  left: -5px;
  width: 95px;
  height: 45px;
}
.viewport {
  position: relative;
  flex: 1;
  min-width: 0;
  overflow: hidden;
  background: linear-gradient(#b3b5b6, #dadbdb);
}
.scene {
  width: 100%;
  height: 100%;
}
.tooltip {
  position: absolute;
  top: 195px;
  left: 230px;
  padding: 3px 6px;
  border: 1px solid #e8a9a4;
  background: #ffc6c0;
  color: #4a3434;
  white-space: nowrap;
}
.mark-face {
  top: 176px;
  left: 213px;
  width: 111px;
  height: 66px;
  border-width: 3px;
}
.brand {
  position: absolute;
  top: 229px;
  left: 229px;
  width: 174px;
  height: 84px;
}
</style>
